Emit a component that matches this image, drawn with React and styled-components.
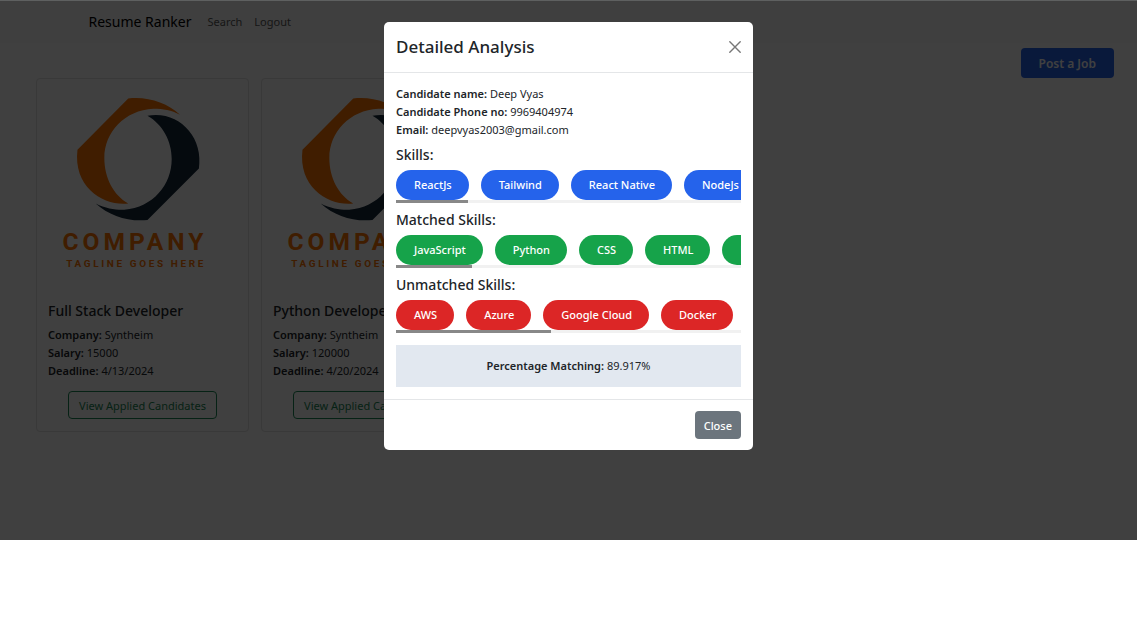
import React from "react";
import styled, { createGlobalStyle } from "styled-components";

const GlobalStyle = createGlobalStyle`
  *, *::before, *::after { box-sizing: border-box; }
  body {
    margin: 0;
    background: #fff;
    color: #212529;
    font-family: "Noto Sans", "Open Sans", sans-serif;
    font-size: 11px;
    line-height: 18px;
  }
  h1, h2, h3, p, ul, dl, dd { margin: 0; padding: 0; }
  button { font-family: inherit; cursor: pointer; }
`;

const Screen = styled.div`
  position: relative;
  min-height: 540px;
  overflow: hidden;
  border-top: 1px solid #5e6060;
`;

const Navbar = styled.nav`
  background: #fafafa;
`;

const NavInner = styled.div`
  display: flex;
  align-items: center;
  max-width: 960px;
  min-height: 42px;
  margin: 0 auto;
`;

const Brand = styled.a`
  margin-right: 16px;
  color: #000;
  font-size: 14px;
  text-decoration: none;
`;

const NavLink = styled.a`
  margin-right: 12px;
  color: #595959;
  font-size: 11px;
  text-decoration: none;
`;

const Toolbar = styled.div`
  display: flex;
  justify-content: flex-end;
  padding: 5px 23px 0;
`;

const PostButton = styled.button`
  height: 30px;
  padding: 0 18px;
  border: 0;
  border-radius: 4px;
  background: #2563eb;
  color: #fff;
  font-size: 12px;
  font-weight: 600;
`;

const JobGrid = styled.main`
  display: flex;
  gap: 12px;
  padding: 0 36px;
`;

const JobCard = styled.article`
  width: 213px;
  border: 1px solid #e2e2e2;
  border-radius: 4px;
  background: #fff;
`;

const Logo = styled.svg`
  display: block;
  width: 100%;
  height: auto;
`;

const JobBody = styled.div`
  padding: 12px 11px;
`;

const JobTitle = styled.h2`
  margin-bottom: 6px;
  font-size: 14px;
  font-weight: 500;
  line-height: 18px;
  white-space: nowrap;
`;

const Label = styled.strong`
  font-weight: 600;
`;

const CandidatesButton = styled.button`
  display: block;
  height: 28px;
  margin: 11px auto 0;
  padding: 0 10px;
  border: 1px solid #198754;
  border-radius: 4px;
  background: transparent;
  color: #198754;
  font-size: 11px;
  white-space: nowrap;
`;

const Backdrop = styled.div`
  position: absolute;
  inset: 0;
  padding: 21px 12px;
  background: rgba(0, 0, 0, 0.75);
`;

const Dialog = styled.section`
  width: 100%;
  max-width: 369px;
  margin: 0 auto;
  border-radius: 5px;
  background: #fff;
`;

const DialogHeader = styled.header`
  display: flex;
  align-items: center;
  justify-content: space-between;
  min-height: 51px;
  padding: 0 12px;
  border-bottom: 1px solid #e4e6e8;
`;

const DialogTitle = styled.h1`
  font-size: 17px;
  font-weight: 500;
  line-height: 26px;
`;

const IconButton = styled.button`
  display: flex;
  padding: 0;
  border: 0;
  background: none;
  color: #777;
`;

const DialogBody = styled.div`
  padding: 12px;
`;

const SkillSection = styled.section`
  padding: 6px 0 1px;
`;

const SkillHeading = styled.h2`
  margin-bottom: 5px;
  font-size: 14px;
  font-weight: 500;
  line-height: 20px;
`;

const SkillList = styled.ul`
  display: flex;
  gap: 12px;
  overflow: hidden;
  list-style: none;
`;

const Pill = styled.li`
  flex: none;
  padding: 0 17px 0 18px;
  border-radius: 15px;
  background: ${(p) => p.$color};
  color: #fff;
  font-size: 11px;
  font-weight: 500;
  line-height: 30px;
`;

const ScrollTrack = styled.div`
  height: 3px;
  background: #f1f1f1;
`;

const ScrollThumb = styled.div`
  width: ${(p) => p.$portion}%;
  height: 100%;
  background: #888;
`;

const MatchBox = styled.p`
  margin-top: 11px;
  padding: 12px;
  background: #e2e8f0;
  text-align: center;
`;

const DialogFooter = styled.footer`
  display: flex;
  justify-content: flex-end;
  padding: 11px 12px;
  border-top: 1px solid #e4e6e8;
`;

const CloseButton = styled.button`
  height: 28px;
  padding: 0 9px;
  border: 0;
  border-radius: 4px;
  background: #6c757d;
  color: #fff;
  font-size: 11px;
  font-weight: 500;
`;

const jobs = [
  { title: "Full Stack Developer", company: "Syntheim", salary: "15000", deadline: "4/13/2024" },
  { title: "Python Developer", company: "Syntheim", salary: "120000", deadline: "4/20/2024" },
];

const skillGroups = [
  { title: "Skills:", color: "#2563eb", portion: 21, skills: ["ReactJs", "Tailwind", "React Native", "NodeJs"] },
  { title: "Matched Skills:", color: "#16a34a", portion: 22, skills: ["JavaScript", "Python", "CSS", "HTML", "ReactJs"] },
  { title: "Unmatched Skills:", color: "#dc2626", portion: 45, skills: ["AWS", "Azure", "Google Cloud", "Docker"] },
];

const LogoText = styled.text`
  fill: #ff7300;
  font-family: Roboto, sans-serif;
  font-weight: 700;
  font-size: ${(p) => p.$size}px;
  letter-spacing: ${(p) => p.$tracking}px;
`;

function CompanyLogo() {
  return (
    <Logo viewBox="0 0 636 636" role="img" aria-label="Company logo">
      <path
        fill="#ff7300"
        d="M275 59C332 52 392 71 431 108C405 94 380 90 351 90C264 94 203 161 203 238C203 297 230 350 275 375C206 384 108 330 122 213Z"
      />
      <path
        fill="#14283a"
        d="M333 111C426 94 503 174 488 270L333 425C276 431 217 412 177 375C208 391 238 395 263 394C350 387 406 318 406 241C406 188 379 137 333 111Z"
      />
      <LogoText x="77" y="516" $size={74} $tracking={12}>COMPANY</LogoText>
      <LogoText x="88" y="567" $size={30} $tracking={8}>TAGLINE GOES HERE</LogoText>
    </Logo>
  );
}

function Fact({ label, children }) {
  return (
    <p>
      <Label>{label}</Label> {children}
    </p>
  );
}

export default function App() {
  return (
    <>
      <GlobalStyle />
      <Screen>
        <Navbar>
          <NavInner>
            <Brand href="#">Resume Ranker</Brand>
            <NavLink href="#search">Search</NavLink>
            <NavLink href="#logout">Logout</NavLink>
          </NavInner>
        </Navbar>
        <Toolbar>
          <PostButton type="button">Post a Job</PostButton>
        </Toolbar>
        <JobGrid>
          {jobs.map((job) => (
            <JobCard key={job.title}>
              <CompanyLogo />
              <JobBody>
                <JobTitle>{job.title}</JobTitle>
                <Fact label="Company:">{job.company}</Fact>
                <Fact label="Salary:">{job.salary}</Fact>
                <Fact label="Deadline:">{job.deadline}</Fact>
                <CandidatesButton type="button">View Applied Candidates</CandidatesButton>
              </JobBody>
            </JobCard>
          ))}
        </JobGrid>
        <Backdrop>
          <Dialog role="dialog" aria-modal="true" aria-labelledby="analysis-title">
            <DialogHeader>
              <DialogTitle id="analysis-title">Detailed Analysis</DialogTitle>
              <IconButton type="button" aria-label="Close dialog">
                <svg width="12" height="12" viewBox="0 0 12 12" fill="none" stroke="currentColor" strokeWidth="1.4" strokeLinecap="round">
                  <path d="M.8.8l10.4 10.4M11.2.8L.8 11.2" />
                </svg>
              </IconButton>
            </DialogHeader>
            <DialogBody>
              <Fact label="Candidate name:">Deep Vyas</Fact>
              <Fact label="Candidate Phone no:">9969404974</Fact>
              <Fact label="Email:">deepvyas2003@gmail.com</Fact>
              {skillGroups.map((group) => (
                <SkillSection key={group.title}>
                  <SkillHeading>{group.title}</SkillHeading>
                  <SkillList>
                    {group.skills.map((skill) => (
                      <Pill key={skill} $color={group.color}>{skill}</Pill>
                    ))}
                  </SkillList>
                  <ScrollTrack>
                    <ScrollThumb $portion={group.portion} />
                  </ScrollTrack>
                </SkillSection>
              ))}
              <MatchBox>
                <Label>Percentage Matching:</Label> 89.917%
              </MatchBox>
            </DialogBody>
            <DialogFooter>
              <CloseButton type="button">Close</CloseButton>
            </DialogFooter>
          </Dialog>
        </Backdrop>
      </Screen>
    </>
  );
}
